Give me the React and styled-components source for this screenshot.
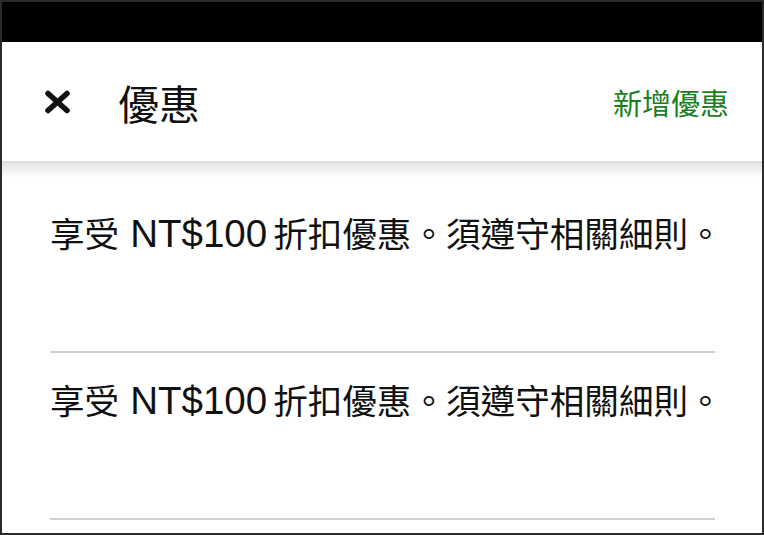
import React from "react";
import styled, { createGlobalStyle } from "styled-components";

const GlobalStyle = createGlobalStyle`
  html, body {
    margin: 0;
    padding: 0;
    background: #ffffff;
  }
  body {
    font-family: "Liberation Sans", "Noto Sans CJK TC", sans-serif;
    color: #111111;
  }
`;

const Frame = styled.div`
  width: 764px;
  height: 535px;
  box-sizing: border-box;
  border: 2px solid #2b2b2b;
  overflow: hidden;
  display: flex;
  flex-direction: column;
  background: #ffffff;
`;

const StatusBar = styled.div`
  height: 40px;
  flex-shrink: 0;
  background: #000000;
`;

const Header = styled.header`
  height: 119px;
  flex-shrink: 0;
  display: flex;
  align-items: center;
  padding: 0 33px 0 42px;
  background: #ffffff;
`;

const HeaderShadow = styled.div`
  height: 17px;
  flex-shrink: 0;
  background: linear-gradient(#d9d9d9 0px, #e8e8e8 3px, #f2f2f2 10px, #ffffff 17px);
`;

const CloseButton = styled.button`
  width: 27px;
  height: 24px;
  padding: 0;
  border: 0;
  background: none;
  display: flex;
  cursor: pointer;
  margin-top: 1px;
`;

const Title = styled.h1`
  margin: 0 0 0 47px;
  font-family: "Noto Sans CJK TC", sans-serif;
  font-size: 41px;
  font-weight: 400;
  line-height: 48px;
  color: #111111;
  flex: 1;
`;

const AddPromo = styled.a`
  font-family: "Noto Sans CJK TC", sans-serif;
  font-size: 29px;
  line-height: 36px;
  color: #197f1f;
  text-decoration: none;
  cursor: pointer;
`;

const PromoList = styled.ul`
  list-style: none;
  margin: 0;
  padding: 8px 47px 0 48px;
`;

const PromoItem = styled.li`
  padding: 26px 0 97px;
  border-bottom: 2px solid #cfcfcf;
`;

const PromoText = styled.p`
  margin: 0;
  font-family: "Noto Sans CJK TC", sans-serif;
  font-size: 34.6px;
  line-height: 40px;
  color: #111111;
  white-space: nowrap;
`;

const Amount = styled.span`
  font-family: "Liberation Sans", "Noto Sans CJK TC", sans-serif;
  font-size: 38.5px;
  margin: 0 6px 0 11px;
`;

function CloseIcon() {
  return (
    <svg width="27" height="24" viewBox="0 0 27 24">
      <path
        d="M4 3.5 L23 20.5 M23 3.5 L4 20.5"
        stroke="#111"
        strokeWidth="5.6"
        strokeLinecap="round"
        fill="none"
      />
    </svg>
  );
}

const promos = [
  { id: 1, amount: "NT$100" },
  { id: 2, amount: "NT$100" },
];

export default function App() {
  return (
    <>
      <GlobalStyle />
      <Frame>
        <StatusBar />
        <Header>
          <CloseButton aria-label="關閉">
            <CloseIcon />
          </CloseButton>
          <Title>優惠</Title>
          <AddPromo>新增優惠</AddPromo>
        </Header>
        <HeaderShadow />
        <PromoList>
          {promos.map(p => (
            <PromoItem key={p.id}>
              <PromoText>
                享受<Amount>{p.amount}</Amount>折扣優惠。須遵守相關細則。
              </PromoText>
            </PromoItem>
          ))}
        </PromoList>
      </Frame>
    </>
  );
}
